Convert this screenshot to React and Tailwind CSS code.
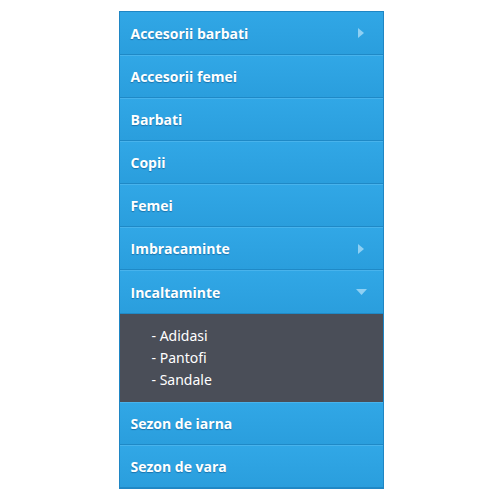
import React from 'react';

const items = [
  { label: 'Accesorii barbati', icon: 'right' },
  { label: 'Accesorii femei' },
  { label: 'Barbati' },
  { label: 'Copii' },
  { label: 'Femei' },
  { label: 'Imbracaminte', icon: 'right' },
  { label: 'Incaltaminte', icon: 'down', open: ['Adidasi', 'Pantofi', 'Sandale'] },
  { label: 'Sezon de iarna' },
  { label: 'Sezon de vara' },
];

const Caret = ({ dir }) =>
  dir === 'right' ? (
    <svg width="6" height="10" viewBox="0 0 6 10" className="mr-[19px]">
      <path d="M0 0 L6 5 L0 10 Z" fill="#8fd0f3" />
    </svg>
  ) : (
    <svg width="11" height="6" viewBox="0 0 11 6" className="mr-[16px]">
      <path d="M0 0 L11 0 L5.5 6 Z" fill="#8fd0f3" />
    </svg>
  );

const App = () => {
  return (
    <div className="flex min-h-[500px] w-[500px] justify-center bg-white pt-[11px]">
      <div className="ml-[2px] w-[265px] self-start border border-[#1f86c4] font-['Open_Sans',sans-serif]">
        {items.map((item, i) => (
          <div key={item.label}>
            <div
              className={`flex ${item.open ? 'h-[44px]' : 'h-[43px]'} items-center justify-between bg-gradient-to-b from-[#31a7e6] to-[#2a9edd] ${
                i > 0 ? 'border-t border-t-[#48b3ec]' : ''
              } border-b border-b-[#1f89c6]`}
            >
              <span className="pl-[11px] text-[14px] font-bold text-white [text-shadow:0_1px_1px_rgba(0,60,110,0.45)]">
                {item.label}
              </span>
              {item.icon && <Caret dir={item.icon} />}
            </div>
            {item.open && (
              <ul className="bg-[#4a4e58] py-[11px] pl-[32px] font-['Noto_Sans',sans-serif] text-[14px] leading-[22px] text-white">
                {item.open.map((s) => (
                  <li key={s}>- {s}</li>
                ))}
              </ul>
            )}
          </div>
        ))}
      </div>
    </div>
  );
};

export default App;
